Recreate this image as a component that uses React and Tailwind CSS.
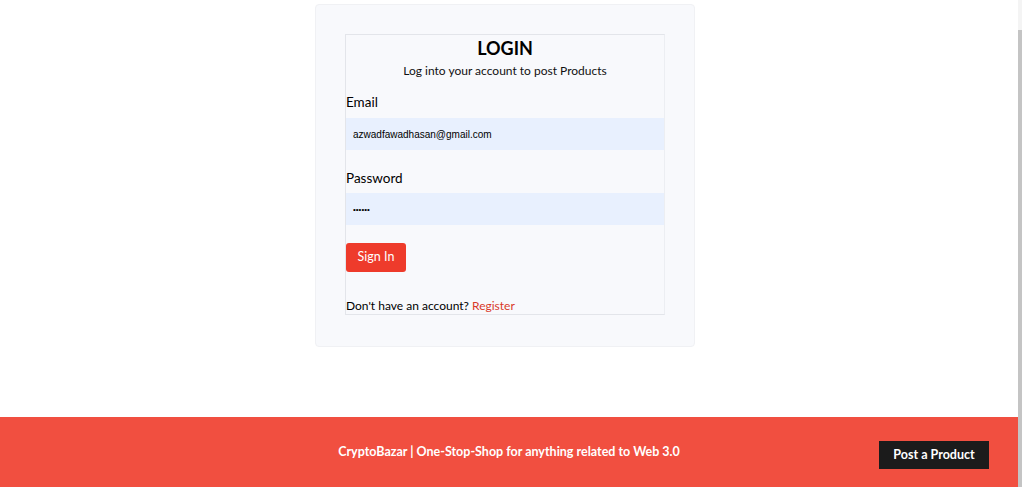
import React from 'react';

export default function App() {
  return (
    <div className="flex h-[487px] w-[1022px] overflow-hidden bg-white" style={{ fontFamily: 'Lato, "Noto Sans", sans-serif' }}>
      <div className="flex w-[1018px] flex-col">
        <main className="flex-1 pt-[4px]">
          <div className="ml-[315px] w-[380px] rounded-sm border border-[#f0f1f4] bg-[#f8f9fc] px-[29px] pt-[29px] pb-[31px]">
            <div className="border-x border-b border-t border-[#e3e5ea] border-r-[#eceef2]">
              <h1 className="text-center text-[18px] font-bold leading-[26px] text-black">LOGIN</h1>
              <p className="mt-[1px] text-center text-[12px] leading-[18px] text-[#111]">Log into your account to post Products</p>

              <label className="mt-[12px] block text-[13.5px] leading-[20px] text-black">Email</label>
              <input
                readOnly
                value="azwadfawadhasan@gmail.com"
                className="mt-[6px] block h-[32px] w-full bg-[#e8f0fe] px-[7px] text-[10px] text-black outline-none"
                style={{ fontFamily: '"Liberation Sans", Arial, sans-serif' }}
              />

              <label className="mt-[18px] block text-[13.5px] leading-[20px] text-black">Password</label>
              <input
                readOnly
                type="password"
                value="123456"
                className="mt-[5px] block h-[32px] w-full bg-[#e8f0fe] px-[7px] text-[8px] text-black outline-none"
                style={{ fontFamily: '"Liberation Sans", Arial, sans-serif' }}
              />

              <button className="mt-[18px] h-[29px] w-[60px] rounded-[3px] bg-[#ee3b2b] text-[12.5px] text-white">Sign In</button>

              <p className="mt-[26px] text-[12px] leading-[16px] text-black">
                Don't have an account? <a className="text-[#d9392a]">Register</a>
              </p>
            </div>
          </div>
        </main>

        <footer className="grid h-[70px] grid-cols-[1fr_auto_1fr] items-center bg-[#f14f40]">
          <div />
          <p className="text-[12.5px] font-bold text-white">CryptoBazar | One-Stop-Shop for anything related to Web 3.0</p>
          <div className="flex justify-end pr-[29px]">
            <button className="mt-[6px] h-[28px] w-[110px] bg-[#1b1b1b] text-[12.5px] font-bold text-white">Post a Product</button>
          </div>
        </footer>
      </div>

      <div className="flex w-[4px] flex-col">
        <div className="h-[30px] bg-[#f4f4f4]" />
        <div className="flex-1 bg-[#c4c4c4]" />
      </div>
    </div>
  );
}
